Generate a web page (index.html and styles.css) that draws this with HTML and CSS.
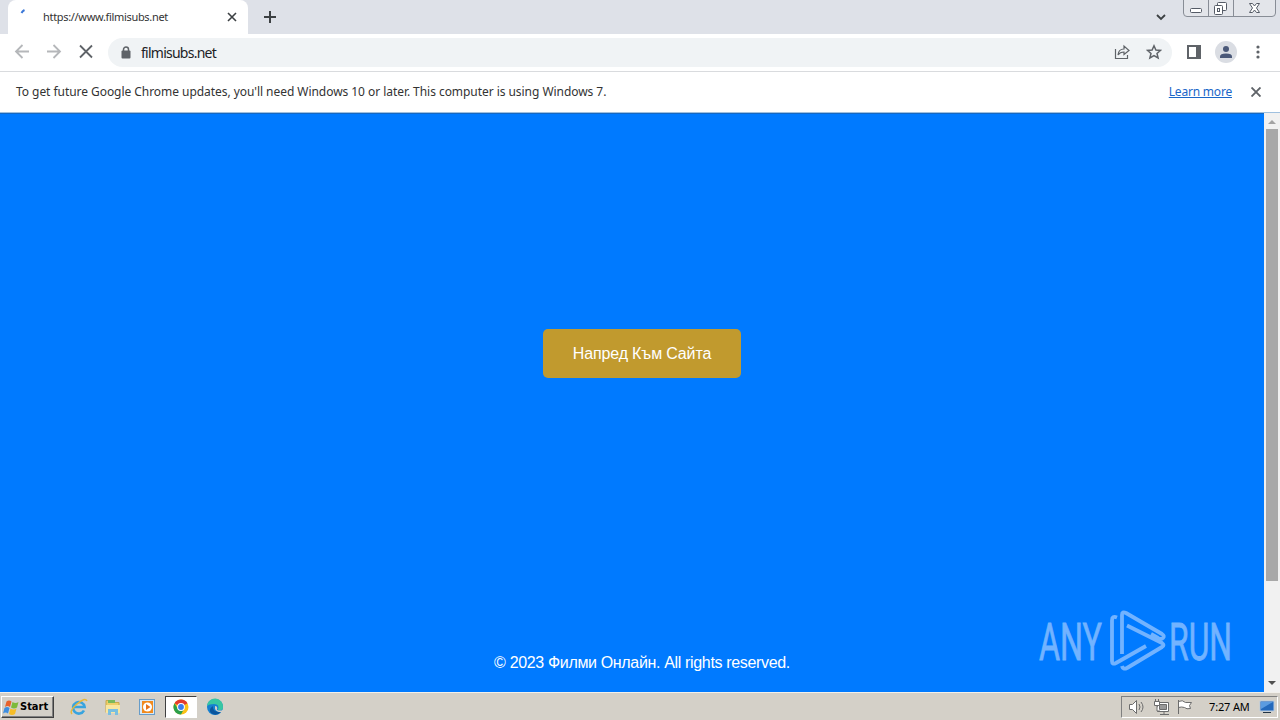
FILE: index.html
```html
<!DOCTYPE html>
<html lang="bg">
  <head>
    <meta charset="utf-8">
    <title>filmisubs.net</title>
    <link rel="stylesheet" href="styles.css">
  </head>
  <body>
    <header>
      <div class="tabs">
        <div class="tab">
          <svg class="spinner" width="16" height="16"><path d="M4.500 5 Q5.500 3 7.500 2" fill="none" stroke="#3b78d8" stroke-width="2"/></svg>
          <span class="tab-title">https://www.filmisubs.net</span>
          <svg width="10" height="10"><path d="M1 1l8 8M9 1l-8 8" stroke="#3c4043" stroke-width="1.6"/></svg>
        </div>
        <svg class="new-tab" width="12" height="12"><path d="M6 0v12M0 6h12" stroke="#3c4043" stroke-width="2"/></svg>
        <svg class="tab-search" width="10" height="7"><path d="M1 1l4 4 4-4" fill="none" stroke="#3c4043" stroke-width="1.8"/></svg>
        <svg class="window-buttons" width="94" height="17">
          <path d="M.5 0v13q0 3.500 3.500 3.500h85q3.500 0 3.500-3.500V0M25.500 0v16M50.500 0v16" fill="#e3e5ea" stroke="#888d96"/>
          <rect x="7.500" y="8.500" width="11" height="4" rx="1" fill="#fff" stroke="#555b66"/>
          <g fill="#fff" stroke="#555b66"><rect x="34.500" y="2.500" width="9" height="8" rx="1"/><rect x="31.500" y="5.500" width="8" height="9" rx="1"/><rect x="34.500" y="8.500" width="2" height="3"/></g>
          <path d="M66.500 3.500h3l2 2.500 2-2.500h3l-3 4.500 3 4.500h-3l-2-2.500-2 2.500h-3l3-4.500z" fill="#fff" stroke="#555b66"/>
        </svg>
      </div>
      <div class="toolbar">
        <svg class="nav" width="100" height="36" fill="none" stroke-width="1.800">
          <path d="M29 17.500H16M22.500 11L16 17.500l6.500 6.500M47 17.500h13M53.500 11l6.500 6.500-6.500 6.500" stroke="#b5b7ba"/>
          <path d="M80 11.500l12 12M92 11.500l-12 12" stroke="#5f6368"/>
        </svg>
        <div class="address">
          <svg width="10" height="13"><path d="M2.500 5V3.500a2.500 2.500 0 0 1 5 0V5" fill="none" stroke="#5f6368" stroke-width="1.500"/><rect x=".5" y="4.500" width="9" height="8" rx="1" fill="#5f6368"/></svg>
          <span class="url">filmisubs.net</span>
          <svg class="share" width="16" height="16" fill="none" stroke="#5f6368" stroke-width="1.200"><path d="M1.500 5v9.500h12V11M4 11q.5-6 6-6V2l5 4.500-5 4V8q-4 0-6 3z"/></svg>
          <svg class="star" width="16" height="16" fill="none" stroke="#5f6368" stroke-width="1.500"><path d="M8 1.800l1.900 4.200 4.600.4-3.500 3 1.100 4.500L8 11.500l-4.100 2.400L5 9.400l-3.500-3 4.600-.4z"/></svg>
        </div>
        <svg class="panel" width="14" height="14"><path d="M1 1h12v12H1z" fill="#fff" stroke="#5f6368" stroke-width="2"/><path d="M9 1h5v12H9z" fill="#5f6368"/></svg>
        <svg class="avatar" width="22" height="22"><circle cx="11" cy="11" r="11" fill="#dadde3"/><circle cx="11" cy="8" r="3" fill="#4a5878"/><path d="M5 17v-1.500q0-3 6-3t6 3V17z" fill="#4a5878"/></svg>
        <svg class="dots" width="4" height="14" fill="#5f6368"><circle cx="2" cy="2" r="1.600"/><circle cx="2" cy="7" r="1.600"/><circle cx="2" cy="12" r="1.600"/></svg>
      </div>
      <div class="infobar">
        <span class="info-text">To get future Google Chrome updates, you'll need Windows 10 or later. This computer is using Windows 7.</span>
        <a class="learn">Learn more</a>
        <svg width="10" height="10"><path d="M.5.5l9 9M9.500.5l-9 9" stroke="#5f6368" stroke-width="1.900"/></svg>
      </div>
    </header>
    <main>
      <div class="page">
        <a class="button">Напред Към Сайта</a>
        <p class="copyright">© 2023 Филми Онлайн. All rights reserved.</p>
        <svg class="watermark" width="210" height="78">
          <g class="watermark-text">
            <text x="1" y="52" textLength="63" lengthAdjust="spacingAndGlyphs">ANY</text>
            <text x="131" y="52" textLength="63" lengthAdjust="spacingAndGlyphs">RUN</text>
          </g>
          <g fill="none" stroke="#72b3ff" stroke-width="3.800" stroke-linejoin="round">
            <path d="M79 9.500q-5-2-5 3V53q0 4 4 2l30-17"/>
            <path d="M84 46V7q0-4 4-2l36 21q3 2 1 4t-5 0l-7-4"/>
            <path d="M89 17.500L124 35q3 2 0 4L89 60q-4 2-5-2"/>
          </g>
        </svg>
      </div>
      <div class="scrollbar">
        <svg width="8" height="4"><path d="M0 4l4-4 4 4z" fill="#a3a3a3"/></svg>
        <div class="thumb"></div>
        <svg width="8" height="4"><path d="M0 0l4 4 4-4z" fill="#505050"/></svg>
      </div>
    </main>
    <footer>
      <div class="start">
        <svg width="17" height="16"><path d="M3.500 2.500q2.500-2 5 0L7 8Q4.500 6 2 8z" fill="#e8622c"/><path d="M9.500 3q3 2 6 0L14 8.500q-3 2-6 0z" fill="#7dba3b"/><path d="M1.500 9q2.500-2 5 0L5 14.500q-2.500-2-5 0z" fill="#3e8ee0"/><path d="M7.500 9.500q3 2 6 0L12 15q-3 2-6 0z" fill="#f6bd27"/></svg>
        <span>Start</span>
      </div>
      <div class="quick">
        <svg width="18" height="18"><path d="M14 12.500a5.800 5.800 0 1 1 .6-3.500H4" fill="none" stroke="#38a4df" stroke-width="2.600"/><path d="M2 16Q-1 13 7 6t10-3" fill="none" stroke="#e7b83c" stroke-width="1.500"/></svg>
        <svg width="18" height="18"><path d="M2 2.500h6l1 2h6v10H2z" fill="#edcf68" stroke="#c9a84b"/><path d="M4 2h7v3H4z" fill="#78b95b"/><path d="M2 7h14v8H2z" fill="#f8e6a0"/><path d="M4 17v-6h10v6h-3v-3H7v3z" fill="#79bfe0"/></svg>
        <svg width="18" height="18"><rect x="1.500" y="1.500" width="15" height="15" fill="#d9e9f5" stroke="#669cc9"/><rect x="4" y="3" width="11" height="12" fill="#f18a1d"/><circle cx="9.500" cy="9" r="4.500" fill="#fff"/><path d="M8 6l4.500 3L8 12z" fill="#e8741a"/></svg>
        <div class="active">
          <svg width="16" height="16"><circle cx="8" cy="8" r="7.500" fill="#fbc116"/><path d="M8 8L1.500 4.200a7.500 7.500 0 0 1 13 0z" fill="#e33b2e"/><path d="M8 15.500A7.500 7.500 0 0 1 1.500 4.200L5 10l6 0z" fill="#2b9f4b"/><circle cx="8" cy="8" r="3.900" fill="#fff"/><circle cx="8" cy="8" r="2.900" fill="#3b7ded"/></svg>
        </div>
        <svg width="18" height="18"><circle cx="9" cy="9" r="8" fill="#1680d0"/><path d="M1 8a8 8 0 0 1 16 1q0 4-5 3 2-6-4-6-5 0-7 2z" fill="#38c6a2"/><path d="M7 8q-1 6 8 6-5 5-10 1-3-4 2-7z" fill="#0b559d"/><path d="M9 8q3 0 2 4 3 1 6 0v2q-9 1-8-6z" fill="#d4d0c8"/></svg>
      </div>
      <div class="tray">
        <svg width="70" height="18" fill="#fff" stroke="#6c6c6c">
          <path d="M1.500 6.500h3l4-4v13l-4-4h-3z"/><path d="M11 6q2 3 0 6M13 4q4 5 0 10" fill="none"/>
          <path d="M29.500 4.500h11v9h-11z"/><path d="M31.500 6.500h7v5h-7z" fill="#999"/><path d="M32 16.500h9M36 14v2" fill="none"/>
          <path d="M26.500 3.500h5v4h-5zM27.500 1v2M30.500 1v2M29 8v5h3"/>
          <path d="M50.500 2v14M50.500 3.500q4-2 7 1h6l-2 3 1 3q-4 1-6-1-3-1-6 0"/>
        </svg>
        <span class="clock">7:27 AM</span>
        <svg class="desktop" width="16" height="14"><path d="M1 1h14v10H1z" fill="#2469bc" stroke="#b9cce0"/><path d="M2 2h12L2 9z" fill="#5b9be0"/><path d="M4 12h8v1H4z" fill="#234"/></svg>
      </div>
    </footer>
  </body>
</html>
```
FILE: styles.css
```css
* {
  box-sizing: border-box;
}
body {
  margin: 0;
  width: 1280px;
  height: 720px;
  overflow: hidden;
  font-family: "Noto Sans", sans-serif;
  color: #333;
}
svg {
  display: block;
  flex: none;
}
span, a {
  white-space: nowrap;
}
.tabs {
  height: 34px;
  background: #dee1e8;
  display: flex;
  align-items: center;
}
.tab {
  width: 240px;
  height: 34px;
  margin-left: 8px;
  padding: 0 11px 0 9px;
  background: #fff;
  border-radius: 8px 8px 0 0;
  display: flex;
  align-items: center;
}
.spinner {
  margin-top: -2px;
}
.tab-title {
  flex: 1;
  margin-left: 10px;
  padding-bottom: 2px;
  font-size: 11px;
  letter-spacing: -0.32px;
}
.new-tab {
  margin-left: 16px;
}
.tab-search {
  margin-left: auto;
}
.window-buttons {
  margin-left: 17px;
  margin-right: 3px;
  align-self: flex-start;
}
.toolbar {
  height: 38px;
  padding-right: 20px;
  padding-bottom: 1px;
  border-bottom: 1px solid #d9dbde;
  background: #fff;
  display: flex;
  align-items: center;
}
.address {
  width: 1064px;
  height: 29px;
  margin-left: 8px;
  padding: 0 10px 0 13px;
  border-radius: 15px;
  background: #f0f3f5;
  display: flex;
  align-items: center;
}
.url {
  flex: 1;
  margin-left: 10px;
  color: #202124;
  font-size: 14px;
  letter-spacing: -0.75px;
}
.star {
  margin-left: 16px;
}
.panel {
  margin-left: 15px;
}
.avatar {
  margin-left: 14px;
}
.dots {
  margin-left: auto;
}
.infobar {
  height: 41px;
  padding: 0 19px 0 16px;
  border-bottom: 1px solid #9fc0df;
  background: #fff;
  display: flex;
  align-items: center;
}
.info-text {
  flex: 1;
  padding-bottom: 2px;
  font-size: 12px;
  letter-spacing: -0.05px;
}
.learn {
  margin-right: 19px;
  padding-bottom: 2px;
  color: #1a66c8;
  font-size: 12px;
  letter-spacing: -0.2px;
  text-decoration: underline;
}
main {
  height: 579px;
  display: flex;
}
.page {
  position: relative;
  width: 1264px;
  padding-left: 20px;
  border-top: 1px solid #1668c2;
  background: #007aff;
  display: flex;
  flex-direction: column;
  align-items: center;
  font-family: "Liberation Sans", sans-serif;
  font-size: 16px;
  color: #fff;
}
.button {
  width: 198px;
  height: 49px;
  margin-top: 215px;
  border-radius: 5px;
  background: #c19a2e;
  line-height: 49px;
  text-align: center;
  letter-spacing: -0.15px;
}
.copyright {
  margin: auto 0 19px;
  line-height: 20px;
  letter-spacing: -0.34px;
}
/* lies over the page */
.watermark {
  position: absolute;
  right: 16px;
  bottom: 6px;
}
.watermark-text {
  fill: #72b3ff;
  stroke: #72b3ff;
  stroke-width: 0.8px;
  font-family: Roboto, sans-serif;
  font-size: 52px;
}
.scrollbar {
  width: 16px;
  padding: 7px 0;
  background: #f1f1f1;
  display: flex;
  flex-direction: column;
  align-items: center;
}
.thumb {
  width: 12px;
  height: 452px;
  margin: 5px 0 auto;
  background: #a8a8a8;
}
footer {
  height: 28px;
  padding: 0 2px 0 1px;
  border-top: 1px solid #f2f0eb;
  background: #d4d0c8;
  display: flex;
  align-items: center;
}
.start {
  width: 53px;
  height: 22px;
  padding-left: 1px;
  border: 1px solid;
  border-color: #fff #404040 #404040 #fff;
  box-shadow: inset -1px -1px #808080;
  display: flex;
  align-items: center;
  color: #000;
  font-family: "DejaVu Sans Condensed", "DejaVu Sans", sans-serif;
  font-size: 11px;
  font-weight: bold;
}
.quick {
  margin-left: 16px;
  display: flex;
  align-items: center;
  gap: 16px;
}
.active {
  width: 32px;
  height: 22px;
  margin: 0 -7px 0 -7px;
  border: 1px solid;
  border-color: #404040 #fff #fff #404040;
  background: #fff;
  display: flex;
  align-items: center;
  justify-content: center;
}
.tray {
  width: 157px;
  height: 22px;
  margin-left: auto;
  padding: 0 2px 0 6px;
  border: 1px solid;
  border-color: #808080 #fff #fff #808080;
  display: flex;
  align-items: center;
}
.clock {
  margin-left: 11px;
  color: #000;
  font-size: 11px;
  letter-spacing: -0.15px;
}
.desktop {
  margin-left: auto;
}
```
